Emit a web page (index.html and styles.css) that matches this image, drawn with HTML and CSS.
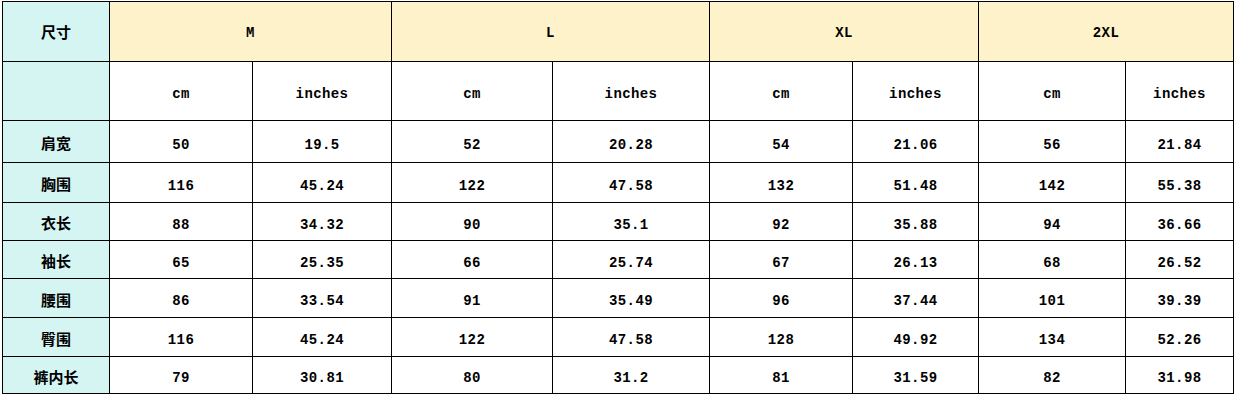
FILE: index.html
```html
<!DOCTYPE html>
<html>
<head>
<meta charset="utf-8">
<link rel="stylesheet" href="styles.css">
</head>
<body>
<table class="size-table">
  <colgroup>
    <col class="c-label"><col class="c1"><col class="c2"><col class="c3"><col class="c4"><col class="c5"><col class="c6"><col class="c7"><col class="c8">
  </colgroup>
  <tr class="r-head">
    <td class="label">尺寸</td>
    <td class="size" colspan="2">M</td>
    <td class="size" colspan="2">L</td>
    <td class="size" colspan="2">XL</td>
    <td class="size" colspan="2">2XL</td>
  </tr>
  <tr class="r-unit">
    <td class="label"></td>
    <td>cm</td><td>inches</td>
    <td>cm</td><td>inches</td>
    <td>cm</td><td>inches</td>
    <td>cm</td><td>inches</td>
  </tr>
  <tr class="r1">
    <td class="label">肩宽</td>
    <td>50</td><td>19.5</td><td>52</td><td>20.28</td><td>54</td><td>21.06</td><td>56</td><td>21.84</td>
  </tr>
  <tr class="r2">
    <td class="label">胸围</td>
    <td>116</td><td>45.24</td><td>122</td><td>47.58</td><td>132</td><td>51.48</td><td>142</td><td>55.38</td>
  </tr>
  <tr class="r3">
    <td class="label">衣长</td>
    <td>88</td><td>34.32</td><td>90</td><td>35.1</td><td>92</td><td>35.88</td><td>94</td><td>36.66</td>
  </tr>
  <tr class="r4">
    <td class="label">袖长</td>
    <td>65</td><td>25.35</td><td>66</td><td>25.74</td><td>67</td><td>26.13</td><td>68</td><td>26.52</td>
  </tr>
  <tr class="r5">
    <td class="label">腰围</td>
    <td>86</td><td>33.54</td><td>91</td><td>35.49</td><td>96</td><td>37.44</td><td>101</td><td>39.39</td>
  </tr>
  <tr class="r6">
    <td class="label">臀围</td>
    <td>116</td><td>45.24</td><td>122</td><td>47.58</td><td>128</td><td>49.92</td><td>134</td><td>52.26</td>
  </tr>
  <tr class="r7">
    <td class="label">裤内长</td>
    <td>79</td><td>30.81</td><td>80</td><td>31.2</td><td>81</td><td>31.59</td><td>82</td><td>31.98</td>
  </tr>
</table>
</body>
</html>
```
FILE: styles.css
```css
html, body {
  margin: 0;
  padding: 0;
  background: #ffffff;
}
body {
  padding: 1px 0 0 2px;
}
.size-table {
  border-collapse: collapse;
  table-layout: fixed;
  width: 1231px;
  font-family: "Liberation Mono", "Noto Sans CJK SC", monospace;
  font-size: 14px;
  font-weight: bold;
  color: #000;
}
.size-table td {
  border: 1px solid #000;
  padding: 6px 0 0 0;
  text-align: center;
  vertical-align: middle;
  letter-spacing: 0.4px;
  line-height: 16px;
}
.size-table .r-head td {
  padding-top: 2px;
}
.size-table .r-unit td {
  padding-top: 5px;
}
.c-label { width: 107px; }
.c1 { width: 143px; }
.c2 { width: 139px; }
.c3 { width: 161px; }
.c4 { width: 157px; }
.c5 { width: 143px; }
.c6 { width: 126px; }
.c7 { width: 147px; }
.c8 { width: 108px; }
.size-table td.label {
  background: #d5f5f3;
  font-family: "Noto Sans CJK SC", sans-serif;
  font-size: 15px;
  letter-spacing: 0;
  padding-top: 3px;
}
.size-table .r-head td.label {
  padding-top: 1px;
}
.size-table td.size {
  background: #fef2cb;
}
.r-head { height: 60px; }
.r-unit { height: 59px; }
.r1 { height: 42px; }
.r2 { height: 40px; }
.r3 { height: 38px; }
.r4 { height: 38px; }
.r5 { height: 39px; }
.r6 { height: 39px; }
.r7 { height: 37px; }
```
